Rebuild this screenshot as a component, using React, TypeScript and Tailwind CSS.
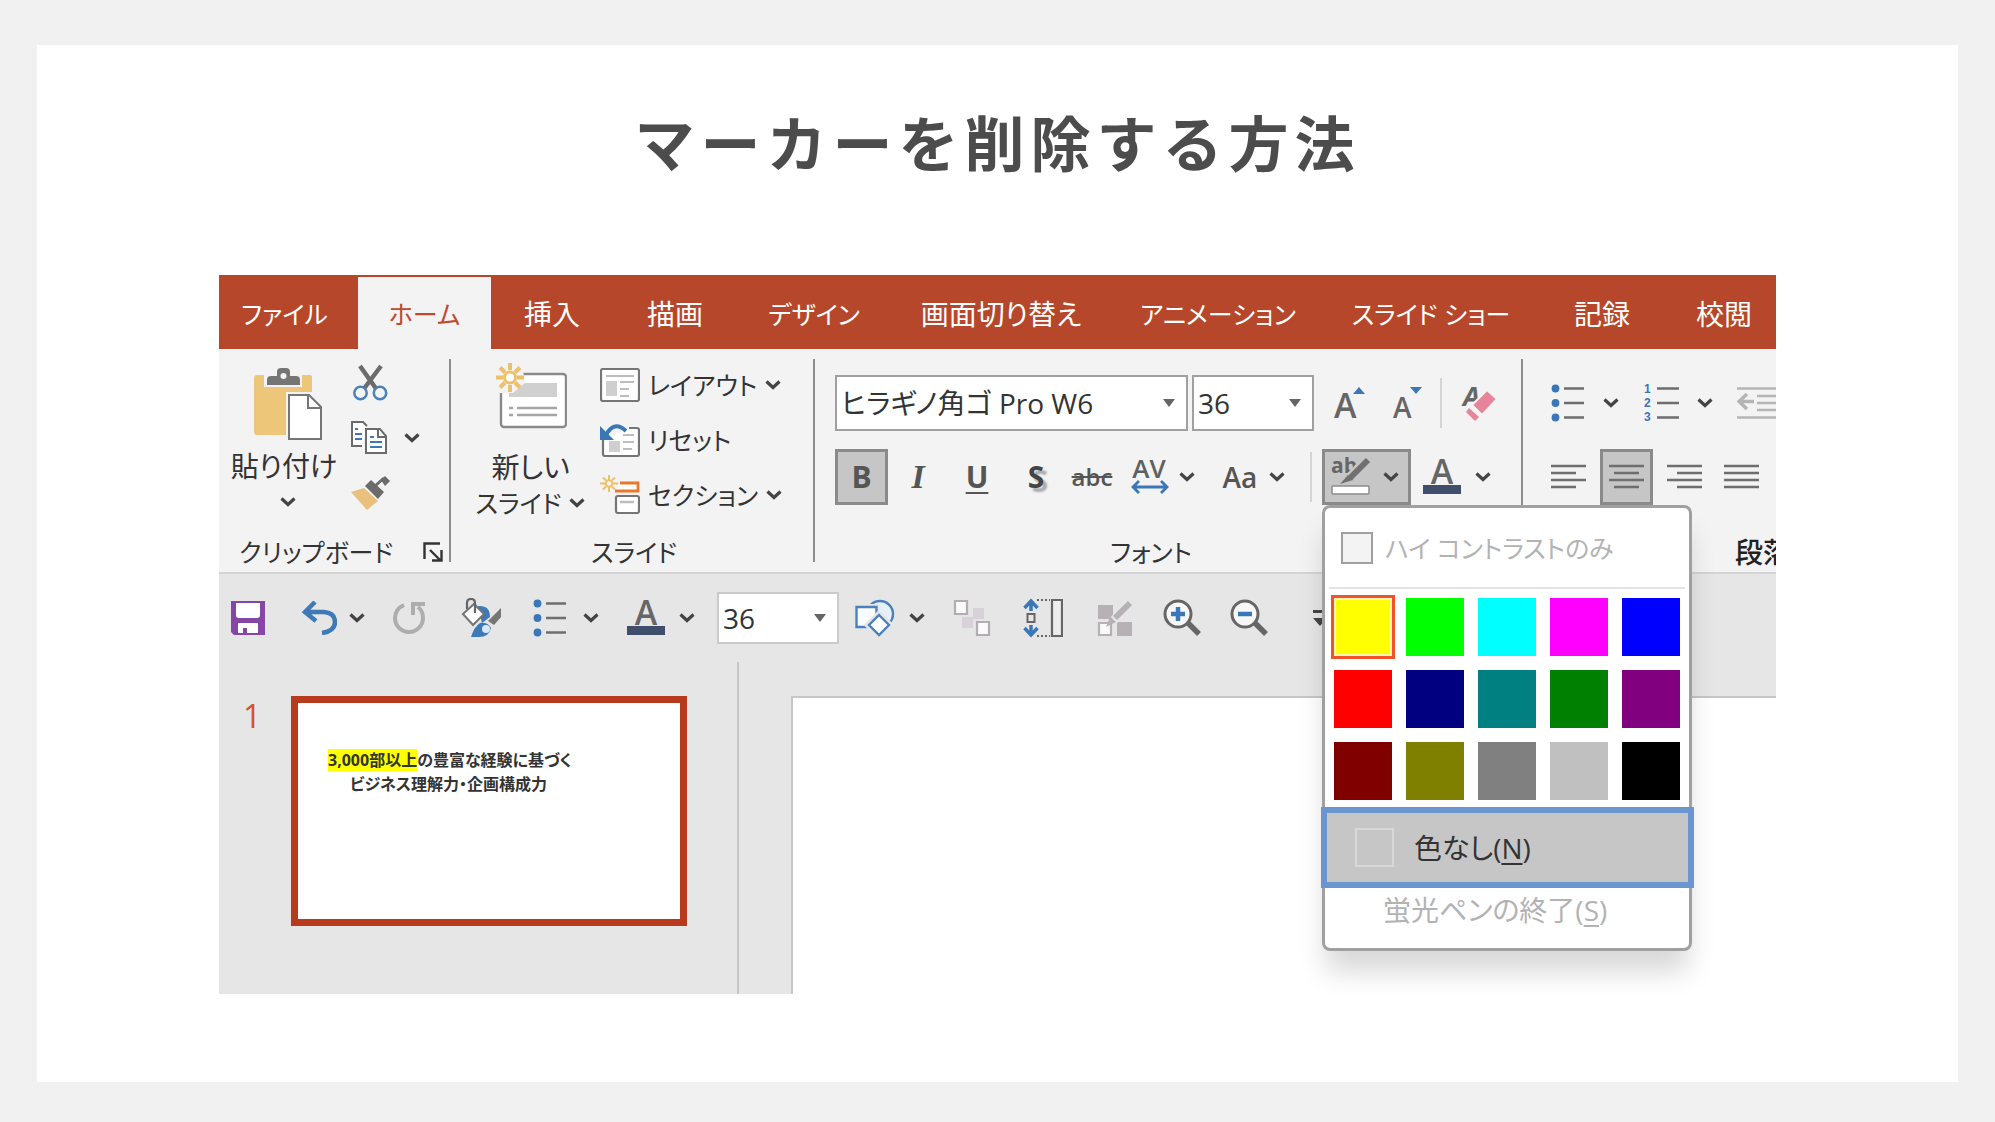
import React from 'react';

type Kids = { children?: React.ReactNode };

const Chevron = () => (
  <svg viewBox="0 0 16 10" className="h-[10px] w-4 shrink-0" fill="none" stroke="#444" strokeWidth="3.200">
    <path d="M1.500 1.500 8 7.500l6.500-6" />
  </svg>
);

const Triangle = () => (
  <svg viewBox="0 0 14 8" className="h-2 w-3.5" fill="#666">
    <path d="M1 0h12L7 8z" />
  </svg>
);

const PasteIcon = () => (
  <svg viewBox="0 0 68 74" className="h-[74px] w-[68px]" fill="none">
    <path d="M3 8h53q2 0 2 2v15H32v43H3q-3 0-3-3V11q0-3 3-3z" fill="#edc67a" />
    <path d="M10 8h38v12H10z" fill="#f3f3f3" />
    <path d="M13 18v-5q0-4 4-4h6V5q0-4 4-4h5q4 0 4 4v4h6q4 0 4 4v5z" fill="#757575" />
    <circle cx="29.500" cy="9" r="3" fill="#f3f3f3" />
    <path d="M32 25h36v49H32z" fill="#f3f3f3" />
    <path d="M35 28h20l12 12v32H35z" fill="#fff" stroke="#757575" strokeWidth="2" />
    <path d="M54 28v13h13" stroke="#757575" strokeWidth="2" />
  </svg>
);

const ScissorsIcon = () => (
  <svg viewBox="0 0 38 38" className="h-[38px] w-[38px]" fill="none">
    <path d="M9 2 26 26M30 2 12 26" stroke="#6b6b6b" strokeWidth="4.500" />
    <circle cx="9.500" cy="29" r="6.200" stroke="#4a81bd" strokeWidth="2.500" fill="#f3f3f3" />
    <circle cx="29" cy="29" r="6.200" stroke="#4a81bd" strokeWidth="2.500" fill="#f3f3f3" />
  </svg>
);

const CopyIcon = () => (
  <svg viewBox="0 0 38 36" className="h-9 w-[38px]" fill="none" strokeWidth="2" stroke="#6b6b6b">
    <path d="M12 26H2V2h11l4 4" fill="#fff" />
    <path d="M5 9h3M5 14h7M5 19h7" stroke="#3a76b8" />
    <path d="M16 9h14l6 7v17H16z" fill="#fff" />
    <path d="M28 9v8h8" />
    <path d="M20 17h4M20 22h12M20 27h12" stroke="#3a76b8" />
  </svg>
);

const BrushIcon = () => (
  <svg viewBox="0 0 40 36" className="h-9 w-10" fill="none">
    <path d="m1 17 13-4 14 13-11 9z" fill="#e9c07c" />
    <path d="m15 11 6-6 13 12-6 7z" fill="#6b6b6b" />
    <path d="m25 11 9-8" stroke="#6b6b6b" strokeWidth="3" />
    <path d="m31 5 4-4 5 5-5 5z" fill="#6b6b6b" />
  </svg>
);

const LauncherIcon = () => (
  <svg viewBox="0 0 20 20" className="h-5 w-5" fill="none" stroke="#333" strokeWidth="2.400">
    <path d="M1.500 17V1.500H17M7 8l10 10M9 18.500h9.500V8" />
  </svg>
);

const NewSlideIcon = () => (
  <svg viewBox="0 0 72 66" className="h-[66px] w-[72px]" fill="none">
    <rect x="6" y="11" width="65" height="53" rx="3" fill="#fff" stroke="#8a8a8a" strokeWidth="2.400" />
    <path d="M14 20h48v14H14z" fill="#d0d0d0" />
    <path d="M14 45h4M22 45h40M14 52h4M22 52h40" stroke="#a5a5a5" strokeWidth="2.400" />
    <path d="M0 0h27l3 20-12 10H0z" fill="#f3f3f3" />
    <g stroke="#edc169" strokeWidth="4">
      <path d="M15 0v7M15 22v7M1 14.500h7M22 14.500h7M5 4.500l5 5M20 19.500l5 5M5 24.500l5-5M20 9.500l5-5" />
      <circle cx="15" cy="14.500" r="5.500" fill="#fff" strokeWidth="3" />
    </g>
  </svg>
);

const LayoutIcon = () => (
  <svg viewBox="0 0 40 34" className="h-[34px] w-10" fill="none">
    <rect x="1" y="1" width="38" height="32" rx="2" fill="#fff" stroke="#757575" strokeWidth="2.200" />
    <path d="M6 13h11v15H6z" fill="#cfcfcf" />
    <path d="M6 8h28M20 14h14M20 21h9M20 28h9" stroke="#bdbdbd" strokeWidth="2.200" />
  </svg>
);

const ResetIcon = () => (
  <svg viewBox="0 0 40 34" className="h-[34px] w-10" fill="none">
    <path d="M3 17v14q0 2 2 2h32q2 0 2-2V7q0-2-2-2h-8" fill="#fff" stroke="#757575" strokeWidth="2.200" />
    <path d="M9 18h11v11H9z" fill="#cfcfcf" />
    <path d="M23 12h11M23 19h11M23 26h9" stroke="#bdbdbd" strokeWidth="2.200" />
    <path d="M6 12Q14-3 26 8" stroke="#3a76b8" strokeWidth="4" />
    <path d="M0 3v14h14z" fill="#3a76b8" />
  </svg>
);

const SectionIcon = () => (
  <svg viewBox="0 0 40 39" className="h-[39px] w-10" fill="none">
    <path d="M20 8h18v8H15" stroke="#e8792b" strokeWidth="2.800" fill="#fff" />
    <rect x="16" y="21" width="23" height="17" rx="2" fill="#fff" stroke="#757575" strokeWidth="2.200" />
    <path d="M20 27h14" stroke="#bdbdbd" strokeWidth="2.500" />
    <path d="M9 0v5M9 12v5M0 8.500h5M13 8.500h5M3 2.500l3 3M12 11.500l3 3M3 14.500l3-3M12 5.500l3-3" stroke="#edc169" strokeWidth="2" />
    <circle cx="9" cy="8.500" r="3.300" stroke="#edc169" strokeWidth="2" />
  </svg>
);

const EraserIcon = () => (
  <svg viewBox="0 0 38 40" className="h-10 w-[38px] overflow-visible" fill="none">
    <text x="1" y="23" fontFamily="Open Sans" fontSize="27" fontStyle="italic" fontWeight="700" fill="#666">A</text>
    <path d="M25 7 35 16 20 32 10 22z" fill="#e8849a" stroke="#f3f3f3" strokeWidth="2" />
    <path d="m7 25 10 9-4 4-9-9z" fill="#e8849a" />
  </svg>
);

const BulletsIcon = () => (
  <svg viewBox="0 0 34 38" className="h-[38px] w-[34px]">
    <g fill="#3a76b8">
      <circle cx="4.500" cy="4.500" r="3.900" />
      <circle cx="4.500" cy="19" r="3.900" />
      <circle cx="4.500" cy="33.500" r="3.900" />
    </g>
    <path d="M13 4.500h20M13 19h20M13 33.500h20" stroke="#6e6e6e" strokeWidth="2.400" />
  </svg>
);

const NumberingIcon = () => (
  <svg viewBox="0 0 36 42" className="h-[42px] w-9 overflow-visible">
    <g fill="#3a76b8" fontFamily="Liberation Sans" fontSize="12" fontWeight="700">
      <text x="1" y="11">1</text>
      <text x="1" y="25">2</text>
      <text x="1" y="39">3</text>
    </g>
    <path d="M14 6.500h22M14 21h22M14 35.500h22" stroke="#6e6e6e" strokeWidth="2.400" />
  </svg>
);

const IndentIcon = () => (
  <svg viewBox="0 0 40 32" className="h-8 w-10" fill="none" stroke="#b5b5b5" strokeWidth="2.400">
    <path d="M0 1.500h40M20 9h20M20 16h20M20 23h20M0 30.500h40" />
    <path d="M17 14.500H3M10 7l-8 7.500 8 7.500" strokeWidth="3.500" />
  </svg>
);

const AlignIcon = ({ d }: { d: string }) => (
  <svg viewBox="0 0 35 26" className="h-[26px] w-[35px]" stroke="#6e6e6e" strokeWidth="2.400">
    <path d={d} />
  </svg>
);

const HighlightIcon = () => (
  <svg viewBox="0 0 40 40" className="h-10 w-10 overflow-visible" fill="none">
    <text x="0" y="16" fontFamily="Open Sans" fontSize="21" fontWeight="700" fill="#666">ab</text>
    <path d="m35 3-18 19" stroke="#c6c6c6" strokeWidth="9" />
    <path d="m37 3-18 18" stroke="#707070" strokeWidth="6" />
    <path d="m17 18 5 5-13 4z" fill="#707070" />
    <rect x="1" y="29" width="37" height="8" rx="1" fill="#fff" stroke="#8c8c8c" strokeWidth="1.500" />
  </svg>
);

const FontColorIcon = () => (
  <svg viewBox="0 0 38 36" className="h-9 w-[38px] overflow-visible">
    <text x="19" y="25" textAnchor="middle" fontFamily="Open Sans" fontSize="34" fontWeight="600" fill="#666">A</text>
    <path d="M0 26h38v9H0z" fill="#3f4f6b" />
  </svg>
);

const SpacingIcon = () => (
  <svg viewBox="0 0 38 36" className="h-9 w-[38px] overflow-visible" fill="none">
    <text x="18" y="19" textAnchor="middle" fontFamily="Open Sans" fontSize="26" fontWeight="600" fill="#606060">AV</text>
    <path d="M2 28h34M8 22l-6 6 6 6M30 22l6 6-6 6" stroke="#3a76b8" strokeWidth="2.800" />
  </svg>
);

const SizeIcon = ({ up }: { up: boolean }) => (
  <svg viewBox="0 0 34 34" className="h-[34px] w-[34px] overflow-visible" fill="#3a76b8">
    {up ? (
      <>
        <text x="1" y="32" fontFamily="Open Sans" fontSize="34" fontWeight="600" fill="#666">A</text>
        <path d="m20 8 6-7 6 7z" />
      </>
    ) : (
      <>
        <text x="1" y="32" fontFamily="Open Sans" fontSize="28" fontWeight="600" fill="#666">A</text>
        <path d="m18 1 6 7 6-7z" />
      </>
    )}
  </svg>
);

const SaveIcon = () => (
  <svg viewBox="0 0 34 34" className="h-[34px] w-[34px]">
    <path d="M0 0h34v34H3l-3-3z" fill="#8447a8" />
    <path d="M5 2h24v12q0 3-3 3H8q-3 0-3-3zM7 22h20v10H16v-5h-4v5H7z" fill="#fff" />
  </svg>
);

const UndoIcon = () => (
  <svg viewBox="0 0 36 34" className="h-[34px] w-9" fill="none" stroke="#3f7ab8" strokeWidth="4.500">
    <path d="M3 11h20q11 1 11 10 0 9-13 11M14 1 4 11l11 9" />
  </svg>
);

const RedoIcon = () => (
  <svg viewBox="0 0 34 34" className="h-[34px] w-[34px]" fill="none" stroke="#adadad" strokeWidth="4">
    <path d="M11 4Q2 8 2 17a14 14 0 0 0 28 0q0-7-5-11" />
    <path d="M20 14V3h12" />
  </svg>
);

const PaintIcon = () => (
  <svg viewBox="0 0 40 40" className="h-10 w-10" fill="none">
    <path d="M17 8q12-1 12 11l-8 6z" fill="#3f7ab8" />
    <path d="M2 16 13 6l10 10-11 11z" fill="#fff" stroke="#757575" strokeWidth="2" />
    <path d="M6 11V5q0-4 4-4t4 4v10" stroke="#666" strokeWidth="2.200" />
    <path d="M40 10v9l-7 8-6-4z" fill="#757575" />
    <path d="M10 39q3-10 9-14 8-1 11 5-2 9-12 9z" fill="#3f7ab8" />
    <circle cx="25" cy="31" r="4" fill="#dbe8f5" />
  </svg>
);

const ShapesIcon = () => (
  <svg viewBox="0 0 40 38" className="h-[38px] w-10" stroke="#4a81bd" strokeWidth="2.400">
    <circle cx="25" cy="15" r="13" fill="#e6f0fa" />
    <path d="M1.500 8h20v20h-20z" fill="#fafcff" stroke="#e6e6e6" strokeWidth="6" />
    <path d="M1.500 8h20v20h-20z" fill="#fafcff" />
    <path d="m24 15 11 11-11 11-11-11z" fill="#fff" stroke="#e6e6e6" strokeWidth="6" />
    <path d="m24 16 10 10-10 10-10-10z" fill="#fff" />
  </svg>
);

const ArrangeIcon = () => (
  <svg viewBox="0 0 38 38" className="h-[38px] w-[38px]" strokeWidth="2.200" stroke="#b3adb3" fill="#fafafa">
    <path d="M9 18h11V9h11v11H20v9H9z" fill="#d8d2d8" stroke="none" />
    <path d="M2 2h12v13H2zM24 23h12v13H24z" />
  </svg>
);

const HeightIcon = () => (
  <svg viewBox="0 0 40 40" className="h-10 w-10" fill="none">
    <path d="M8 3v10M8 37V27M1.500 10 8 3l6.500 7M1.500 30 8 37l6.500-7" stroke="#3a76b8" strokeWidth="3.500" />
    <path d="M4.500 16h7v8h-7z" stroke="#666" strokeWidth="2" />
    <path d="M14 2h13M14 38h13" stroke="#666" strokeWidth="2" strokeDasharray="2 2" />
    <path d="M29 2h10v36H29z" stroke="#666" strokeWidth="2.200" fill="#ededed" />
  </svg>
);

const RecolorIcon = () => (
  <svg viewBox="0 0 36 38" className="h-[38px] w-9" fill="none">
    <path d="M1 6h15v14H1zM20 23h15v14H20z" fill="#b5b1b5" />
    <path d="M2 24h12v12H2z" fill="#fafafa" stroke="#b5b1b5" strokeWidth="2.200" />
    <path d="M33 4 17 21" stroke="#e6e6e6" strokeWidth="9" />
    <path d="M33 4 18 19" stroke="#b5b1b5" strokeWidth="6" />
    <path d="m9 28 4-10 6 5z" fill="#b5b1b5" />
  </svg>
);

const ZoomIcon = ({ plus }: { plus: boolean }) => (
  <svg viewBox="0 0 39 38" className="h-[38px] w-[39px]" fill="none">
    <path d="m23 22 13 13" stroke="#666" strokeWidth="5.500" />
    <circle cx="15" cy="15" r="13" stroke="#666" strokeWidth="3" fill="#f7f7f7" />
    <path d={plus ? 'M8 15h14M15 8v14' : 'M8 15h14'} stroke="#3a76b8" strokeWidth="4.500" />
  </svg>
);

const MoreIcon = () => (
  <svg viewBox="0 0 14 16" className="h-4 w-3.5" fill="#444">
    <path d="M0 0h14v3H0zM0 8h14l-7 8z" />
  </svg>
);

const Group = ({ className, label, children }: Kids & { className: string; label: React.ReactNode }) => (
  <section className={`flex shrink-0 flex-col justify-between ${className}`}>
    {children}
    <div className="flex h-10 items-center whitespace-nowrap">{label}</div>
  </section>
);

const Rule = () => <div className="mt-2.5 mb-2.5 w-[2px] shrink-0 bg-[#8f8f8f]" />;

const tabs: [string, string][] = [
  ['ファイル', 'w-[139px] pr-2 text-[25px]'],
  ['ホーム', 'w-[133px] text-[25px]'],
  ['挿入', 'w-[122px]'],
  ['描画', 'w-[124px]'],
  ['デザイン', 'w-[154px] text-[25px]'],
  ['画面切り替え', 'w-[220px]'],
  ['アニメーション', 'w-[214px] text-[25px]'],
  ['スライド ショー', 'w-[212px] text-[25px]'],
  ['記録', 'w-[130px]'],
  ['校閲', 'w-[114px]'],
];

const swatches: [string, string][] = [
  ['黄', 'bg-[#ffff00]'], ['明るい緑', 'bg-[#00ff00]'], ['水色', 'bg-[#00ffff]'], ['ピンク', 'bg-[#ff00ff]'], ['青', 'bg-[#0000ff]'],
  ['赤', 'bg-[#ff0000]'], ['濃い青', 'bg-[#000080]'], ['青緑', 'bg-[#008080]'], ['緑', 'bg-[#008000]'], ['紫', 'bg-[#800080]'],
  ['濃い赤', 'bg-[#800000]'], ['濃い黄', 'bg-[#808000]'], ['50% 灰色', 'bg-[#808080]'], ['25% 灰色', 'bg-[#c0c0c0]'], ['黒', 'bg-black'],
];

const HighlightMenu = () => (
  <div className="absolute top-full left-0 z-10 w-[370px] rounded-lg border-[3px] border-[#a0a0a0] bg-white pb-4 shadow-[0_24px_28px_-4px_rgba(0,0,0,0.16)]">
    <label className="flex h-[79px] items-center gap-3 pl-4 text-[25px] whitespace-nowrap text-[#b3b3b3]">
      <input type="checkbox" disabled className="h-8 w-8 shrink-0 appearance-none border-2 border-[#a0a0a0] bg-[#f3f3f3]" />
      ハイ コントラストのみ
    </label>
    <div className="mx-1 h-[2px] bg-[#e4e4e4]" />
    <div className="grid grid-cols-5 gap-3.5 px-[9px] pt-[9px] pb-[7px]">
      {swatches.map(([name, color], i) => (
        <button
          key={name}
          aria-label={name}
          className={`aspect-square ${color} ${i === 0 ? 'border-2 border-[#fff6b0] outline-[3px] outline-[#f0532a]' : ''}`}
        />
      ))}
    </div>
    <button className="-mx-1 flex h-[81px] w-[373px] items-center gap-5 border-[6px] border-[#6a96cf] bg-[#c6c6c6] pl-7 whitespace-nowrap text-[#333]">
      <span className="h-[39px] w-[39px] border-2 border-[#d6d9db]" />
      <span>色なし(<u className="underline-offset-4">N</u>)</span>
    </button>
    <button disabled className="block h-11 w-full pl-[58px] text-left whitespace-nowrap text-[#b3b3b3]">
      蛍光ペンの終了(<u className="underline-offset-4">S</u>)
    </button>
  </div>
);

const SelectBox = ({ label, value, className }: { label: string; value: string; className: string }) => (
  <div className={`relative shrink-0 ${className}`}>
    <select aria-label={label} className="h-full w-full appearance-none bg-white pl-1 text-[#333]">
      <option>{value}</option>
    </select>
    <div className="pointer-events-none absolute inset-y-0 right-2.5 flex items-center">
      <Triangle />
    </div>
  </div>
);

const Btn = ({ label, className, children }: Kids & { label: string; className: string }) => (
  <button aria-label={label} className={`flex shrink-0 items-center justify-center ${className}`}>
    {children}
  </button>
);

const Ribbon = () => (
  <div className="flex min-h-[225px] border-b-2 border-[#d4d4d4] bg-[#f3f3f3] text-[#333]">
    <Group
      className="w-[230px]"
      label={
        <>
          <span className="w-[202px] pl-5 text-[25px]">クリップボード</span>
          <Btn label="クリップボードのオプション" className="h-6 w-6"><LauncherIcon /></Btn>
        </>
      }
    >
      <div className="flex">
        <button className="flex w-[130px] flex-col items-center pt-[18px]">
          <span className="pl-2"><PasteIcon /></span>
          <span className="h-14 leading-[50px] whitespace-nowrap">貼り付け</span>
          <span className="pl-2"><Chevron /></span>
        </button>
        <div className="flex flex-col pt-1.5">
          <Btn label="切り取り" className="h-[55px] w-[42px]"><ScissorsIcon /></Btn>
          <Btn label="コピー" className="h-[55px] w-[72px] gap-4"><CopyIcon /><Chevron /></Btn>
          <Btn label="書式のコピー" className="h-[55px] w-[42px]"><BrushIcon /></Btn>
        </div>
      </div>
    </Group>
    <Rule />
    <Group className="w-[362px]" label={<span className="w-full pl-1 text-center text-[25px]">スライド</span>}>
      <div className="flex">
        <button className="flex w-[147px] flex-col items-center pt-[14px] pl-3">
          <NewSlideIcon />
          <span className="mt-5 leading-9 whitespace-nowrap">新しい</span>
          <span className="flex items-center gap-2 text-[25px] leading-9 whitespace-nowrap">スライド<Chevron /></span>
        </button>
        <div className="flex flex-col pt-2 pl-0.5 text-[25px]">
          <button className="flex h-[55px] items-center gap-2 whitespace-nowrap"><LayoutIcon />レイアウト<Chevron /></button>
          <button className="flex h-[55px] items-center gap-2 whitespace-nowrap"><ResetIcon />リセット</button>
          <button className="flex h-[55px] items-center gap-2 whitespace-nowrap"><SectionIcon />セクション<Chevron /></button>
        </div>
      </div>
    </Group>
    <Rule />
    <Group className="w-[706px] pl-5" label={<span className="w-full pr-[54px] text-center text-[25px]">フォント</span>}>
      <div className="flex flex-col gap-[18px] pt-[26px]">
        <div className="flex h-14 items-center">
          <SelectBox label="フォント" value="ヒラギノ角ゴ Pro W6" className="mr-1 h-full w-[353px] border-2 border-[#a0a0a0]" />
          <SelectBox label="フォント サイズ" value="36" className="mr-2 h-full w-[122px] border-2 border-[#a0a0a0]" />
          <Btn label="フォント サイズの拡大" className="w-14"><SizeIcon up /></Btn>
          <Btn label="フォント サイズの縮小" className="w-[62px]"><SizeIcon up={false} /></Btn>
          <div className="h-[50px] w-[2px] bg-[#d4d4d4]" />
          <Btn label="すべての書式をクリア" className="w-[78px]"><EraserIcon /></Btn>
        </div>
        <div className="flex h-14 items-center font-semibold text-[#555]">
          <Btn label="太字" className="h-full w-[53px] border-[3px] border-[#8a8a8a] bg-[#c6c6c6] text-3xl font-bold">B</Btn>
          <Btn label="斜体" className="w-[60px] font-['Liberation_Serif'] text-[34px] font-bold italic">I</Btn>
          <Btn label="下線" className="w-[58px] text-3xl font-bold"><u className="decoration-2 underline-offset-4">U</u></Btn>
          <Btn label="文字の影" className="w-[60px] text-3xl font-bold text-[#444] [text-shadow:4px_4px_2px_#aaa]">S</Btn>
          <Btn label="取り消し線" className="w-[52px] text-2xl"><s>abc</s></Btn>
          <Btn label="文字の間隔" className="w-[90px] gap-2.5"><SpacingIcon /><Chevron /></Btn>
          <Btn label="文字種の変換" className="w-[92px] gap-3 text-[28px]">Aa<Chevron /></Btn>
          <div className="mx-2.5 h-[50px] w-[2px] bg-[#d4d4d4]" />
          <div className="relative h-full text-[28px] font-normal">
            <Btn label="蛍光ペンの色" className="h-full w-[89px] gap-3 border-[3px] border-[#8a8a8a] bg-[#c6c6c6] pr-1">
              <HighlightIcon />
              <Chevron />
            </Btn>
            <HighlightMenu />
          </div>
          <Btn label="フォントの色" className="w-[92px] gap-3.5"><FontColorIcon /><Chevron /></Btn>
        </div>
      </div>
    </Group>
    <Rule />
    <Group className="w-[290px] pl-7" label={<span className="pl-[184px] font-medium text-[#222]">段落</span>}>
      <div className="flex flex-col gap-[18px] pt-[26px]">
        <div className="flex h-14 items-center gap-6">
          <Btn label="箇条書き" className="gap-[18px]"><BulletsIcon /><Chevron /></Btn>
          <Btn label="段落番号" className="gap-[18px]"><NumberingIcon /><Chevron /></Btn>
          <Btn label="インデントを減らす" className=""><IndentIcon /></Btn>
        </div>
        <div className="flex h-14 items-center gap-[14px]">
          <Btn label="左揃え" className=""><AlignIcon d="M0 2h35M0 9h25M0 16h35M0 23h25" /></Btn>
          <Btn label="中央揃え" className="h-full w-[53px] border-[3px] border-[#8a8a8a] bg-[#c6c6c6]">
            <AlignIcon d="M0 2h35M5 9h25M0 16h35M5 23h25" />
          </Btn>
          <Btn label="右揃え" className="mr-2"><AlignIcon d="M0 2h35M10 9h25M0 16h35M10 23h25" /></Btn>
          <Btn label="両端揃え" className=""><AlignIcon d="M0 2h35M0 9h35M0 16h35M0 23h35" /></Btn>
        </div>
      </div>
    </Group>
  </div>
);

const QuickAccess = () => (
  <div className="flex h-[88px] items-center pl-3">
    <Btn label="上書き保存" className="mr-9"><SaveIcon /></Btn>
    <Btn label="元に戻す" className="mr-7 gap-3"><UndoIcon /><Chevron /></Btn>
    <Btn label="やり直し" className="mr-[34px]"><RedoIcon /></Btn>
    <Btn label="塗りつぶし" className="mr-8"><PaintIcon /></Btn>
    <Btn label="箇条書き" className="mr-7 gap-4"><BulletsIcon /><Chevron /></Btn>
    <Btn label="フォントの色" className="mr-[22px] gap-3.5"><FontColorIcon /><Chevron /></Btn>
    <SelectBox label="フォント サイズ" value="36" className="mr-4 h-[52px] w-[122px] border-2 border-[#cacaca]" />
    <Btn label="図形" className="mr-7 gap-3.5"><ShapesIcon /><Chevron /></Btn>
    <Btn label="配置" className="mr-8"><ArrangeIcon /></Btn>
    <Btn label="高さ" className="mr-[34px]"><HeightIcon /></Btn>
    <Btn label="図形の書式" className="mr-[30px]"><RecolorIcon /></Btn>
    <Btn label="拡大" className="mr-7"><ZoomIcon plus /></Btn>
    <Btn label="縮小" className="mr-11"><ZoomIcon plus={false} /></Btn>
    <Btn label="その他" className=""><MoreIcon /></Btn>
  </div>
);

export default function App() {
  return (
    <div lang="ja" className="min-h-screen bg-[#f1f1f1] px-[37px] pt-[45px] pb-10 font-['Open_Sans','Noto_Sans_CJK_JP',sans-serif]">
      <main className="bg-white px-[182px] pt-[54px] pb-[88px]">
        <h1 className="text-center font-['Noto_Sans_CJK_JP',sans-serif] text-6xl leading-[84px] font-bold tracking-widest text-[#4c4c4c]">
          マーカーを削除する方法
        </h1>
        <div className="mt-[92px] overflow-hidden bg-[#e6e6e6] text-[28px] leading-10 [font-feature-settings:'palt']">
          <nav className="flex h-[74px] bg-[#b7472a] pt-0.5 text-white">
            {tabs.map(([name, width], i) => (
              <button
                key={name}
                className={`shrink-0 pt-0.5 whitespace-nowrap ${width} ${i === 1 ? 'bg-[#f3f3f3] text-[#c04a2b]' : ''}`}
              >
                {name}
              </button>
            ))}
          </nav>
          <Ribbon />
          <QuickAccess />
          <div className="flex h-[332px]">
            <aside className="flex w-[520px] shrink-0 items-start border-r-2 border-[#c6c6c6] pt-[34px] pl-6">
              <span className="w-12 text-[32px] text-[#d35230]">1</span>
              <div className="h-[230px] w-[396px] border-[7px] border-[#b83b1d] bg-white pt-[45px] pl-[30px]">
                <p className="w-[241px] text-center text-base leading-6 font-bold whitespace-nowrap text-[#333]">
                  <mark className="bg-[#ffff00] text-[#333]">3,000部以上</mark>の豊富な経験に基づく
                  <br />
                  ビジネス理解力・企画構成力
                </p>
              </div>
            </aside>
            <div className="flex-1 pt-[34px] pl-[52px]">
              <div className="h-full border-t-2 border-l-2 border-[#c6c6c6] bg-white" />
            </div>
          </div>
        </div>
      </main>
    </div>
  );
}
